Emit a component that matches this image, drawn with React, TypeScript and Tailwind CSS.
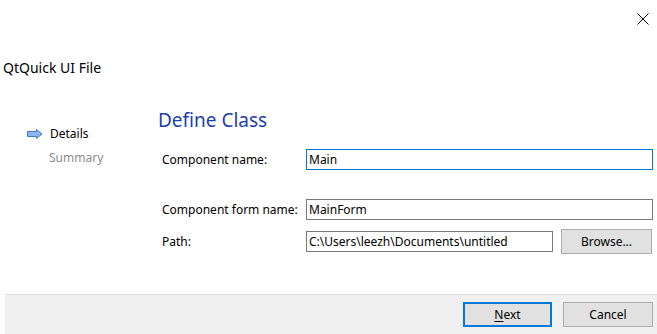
import React, { useState } from 'react';

const font = { fontFamily: '"Segoe UI", "Noto Sans", sans-serif' };

const Arrow: React.FC = () => (
  <svg width="16" height="10" viewBox="0 0 16 10" className="shrink-0">
    <path d="M0.5 2.5 H9.5 V0.5 L15 5 L9.5 9.5 V7.5 H0.5 Z" fill="#8cb8f2" stroke="#3f74cc" strokeWidth="1" />
  </svg>
);

const App: React.FC = () => {
  const [name, setName] = useState('Main');
  const [formName, setFormName] = useState('MainForm');
  const [path, setPath] = useState('C:\\Users\\leezh\\Documents\\untitled');

  return (
    <div className="w-[657px] h-[334px] bg-white flex flex-col text-[12px] text-black" style={font}>
      {/* Close button */}
      <div className="h-[44px] flex justify-end pr-[8px] pt-[13px]">
        <svg width="12" height="12" viewBox="0 0 12 12">
          <path d="M0.5 0.5 L11.5 11.5 M11.5 0.5 L0.5 11.5" stroke="#000" strokeWidth="1" />
        </svg>
      </div>

      {/* Wizard title */}
      <div className="mt-[14px] h-[20px] pl-[3px] text-[14px] leading-[20px]">QtQuick UI File</div>

      {/* Body */}
      <div className="flex-1 flex">
        <div className="w-[158px] pt-[47px] pl-[27px] flex flex-col gap-[6px]">
          <div className="flex items-center gap-[7px] h-[18px]">
            <Arrow />
            <span>Details</span>
          </div>
          <div className="pl-[22px] h-[18px] leading-[18px] text-[#8c8c8c]">Summary</div>
        </div>

        <div className="flex-1 pt-[28px] pr-[4px]">
          <h1 className="text-[19px] leading-[28px] text-[#1c3fae]">Define Class</h1>

          <div className="mt-[15px] flex items-center h-[21px]">
            <label className="w-[148px] pl-[4px]">Component name:</label>
            <input
              value={name}
              onChange={(e) => setName(e.target.value)}
              className="flex-1 h-[21px] px-[2px] border border-[#0078d7] outline-none"
            />
          </div>

          <div className="mt-[29px] flex items-center h-[21px]">
            <label className="w-[148px] pl-[4px]">Component form name:</label>
            <input
              value={formName}
              onChange={(e) => setFormName(e.target.value)}
              className="flex-1 h-[21px] px-[2px] border border-[#7a7a7a] outline-none"
            />
          </div>

          <div className="mt-[9px] flex items-center h-[25px]">
            <label className="w-[148px] pl-[4px]">Path:</label>
            <input
              value={path}
              onChange={(e) => setPath(e.target.value)}
              className="w-[247px] h-[21px] px-[2px] border border-[#7a7a7a] outline-none"
            />
            <button className="ml-[8px] w-[91px] h-[25px] bg-[#e1e1e1] border border-[#adadad]">Browse...</button>
          </div>
        </div>
      </div>

      {/* Footer */}
      <div className="ml-[5px] h-[40px] bg-[#f0f0f0] border-t border-[#dfdfdf] flex items-center justify-end gap-[11px] pr-[4px]">
        <button className="w-[89px] h-[25px] bg-[#e1e1e1] border-2 border-[#0078d7]">
          <span className="underline underline-offset-2">N</span>ext
        </button>
        <button className="w-[90px] h-[25px] bg-[#e1e1e1] border border-[#adadad]">Cancel</button>
      </div>
    </div>
  );
};

export default App;
